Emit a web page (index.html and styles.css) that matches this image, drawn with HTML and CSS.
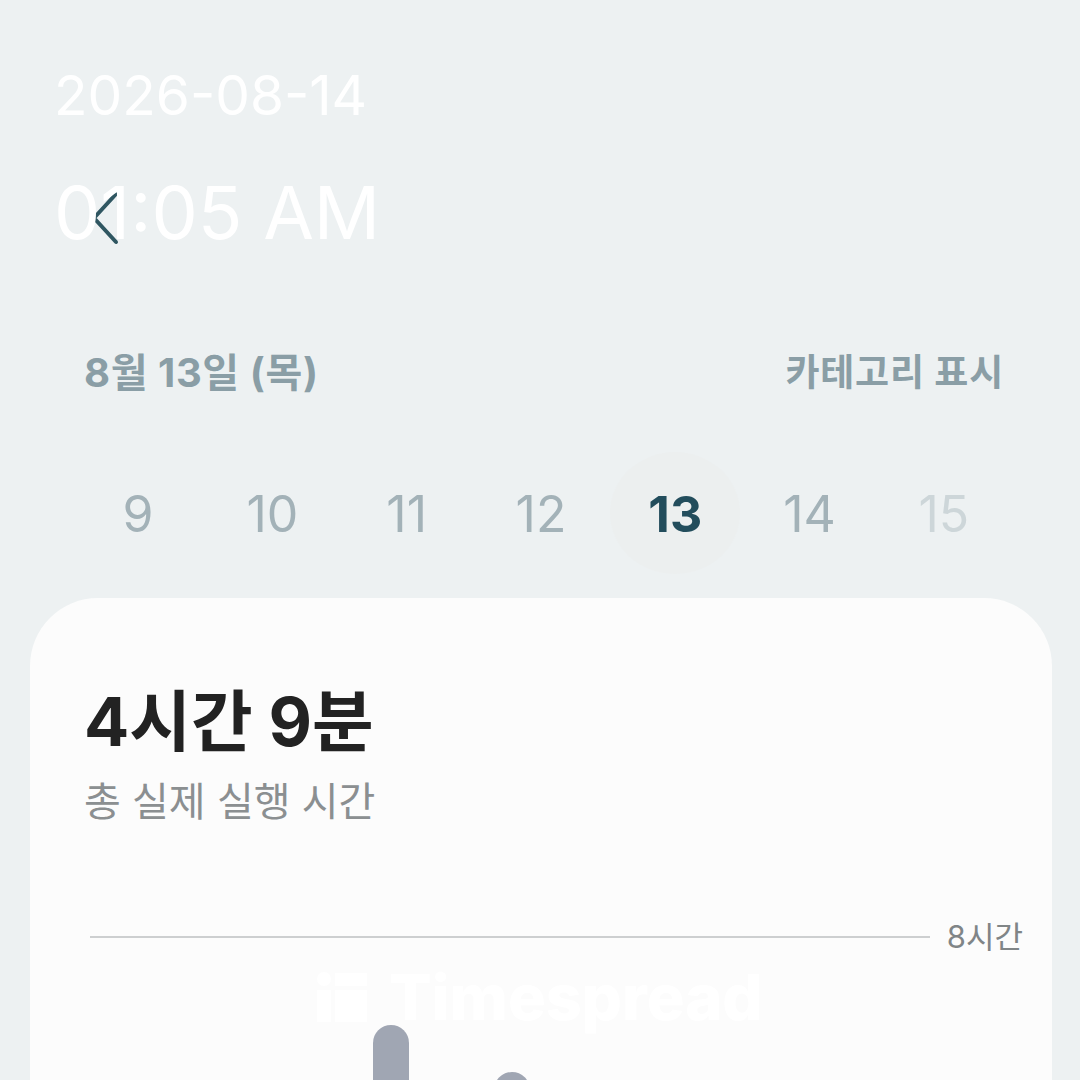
FILE: index.html
```html
<!DOCTYPE html>
<html lang="ko">
<head>
    <meta charset="UTF-8">
    <meta name="viewport" content="width=device-width, initial-scale=1.0">
    <title>Timespread</title>
    <link rel="stylesheet" href="styles.css">
</head>
<body>

    <div class="screen">
        <header class="top-bar">
            <svg class="back-icon" width="30" height="56" viewBox="0 0 30 56">
                <path d="M26 3 L4 27 L26 51" fill="none" stroke="#2f5661" stroke-width="4" stroke-linecap="round" stroke-linejoin="round"/>
            </svg>
        </header>

        <div class="date-row">
            <span class="date-label">8월 13일 (목)</span>
            <span class="category-label">카테고리 표시</span>
        </div>

        <div class="week">
            <div class="day">9</div>
            <div class="day">10</div>
            <div class="day">11</div>
            <div class="day">12</div>
            <div class="day day-active"><span class="day-circle">13</span></div>
            <div class="day">14</div>
            <div class="day day-future">15</div>
        </div>

        <section class="card">
            <h1 class="total">4시간 9분</h1>
            <p class="total-label">총 실제 실행 시간</p>

            <div class="chart">
                <div class="goal-line">
                    <span class="goal-rule"></span>
                    <span class="goal-label">8시간</span>
                </div>
                <div class="bars">
                    <div class="bar bar-tall"></div>
                    <div class="bar bar-short"></div>
                </div>
            </div>
        </section>

        <div class="stamp">
            <div class="stamp-date">2026-08-14</div>
            <div class="stamp-time">01:05 AM</div>
        </div>

        <div class="watermark">
            <svg width="50" height="50" viewBox="0 0 50 50">
                <circle cx="7" cy="7" r="7" fill="#fff"/>
                <rect x="0" y="18" width="14" height="32" fill="#fff"/>
                <rect x="18" y="1" width="32" height="13" fill="#fff"/>
                <rect x="18" y="18" width="32" height="32" fill="#fff"/>
            </svg>
            <span>Timespread</span>
        </div>
    </div>

</body>
</html>
```

FILE: styles.css
```css
* {
    box-sizing: border-box;
}
html, body {
    margin: 0;
    height: 100%;
    overflow: hidden;
}
body {
    font-family: Inter, "Noto Sans CJK KR", sans-serif;
    background-color: #edf1f2;
}
.screen {
    position: relative;
    height: 1080px;
    overflow: hidden;
    padding: 0 28px 0 30px;
}
.top-bar {
    height: 344px;
    padding: 191px 0 0 60px;
}
.back-icon {
    display: block;
}
.date-row {
    display: flex;
    justify-content: space-between;
    padding: 0 48px 0 54px;
    font-size: 37px;
    line-height: 58px;
    font-weight: 700;
    color: #8a9ea6;
}
.date-label {
    font-size: 40px;
    letter-spacing: 0.6px;
}
.category-label {
    letter-spacing: 0.8px;
}
.week {
    display: flex;
    justify-content: center;
    margin-top: 50px;
    height: 122px;
}
.day {
    width: 134.3px;
    display: flex;
    align-items: center;
    justify-content: center;
    font-size: 50px;
    padding-top: 2px;
    color: #a3b2b8;
}
.day-active {
    font-weight: 700;
    color: #224d5c;
    padding-top: 0;
}
.day-circle {
    width: 130px;
    height: 122px;
    display: flex;
    align-items: center;
    justify-content: center;
    padding-top: 2px;
    background-color: #ecefef;
    border-radius: 50%;
}
.day-future {
    color: #cdd6d9;
}
.card {
    margin-top: 24px;
    height: 700px;
    background-color: #fcfcfc;
    border-radius: 68px 68px 0 0;
    padding: 86px 30px 0 54px;
}
.total {
    margin: 0;
    font-size: 67px;
    line-height: 76px;
    font-weight: 700;
    color: #222;
}
.total-label {
    margin: 17px 0 0;
    font-size: 40px;
    line-height: 50px;
    color: #8b8f91;
}
.goal-line {
    display: flex;
    align-items: center;
    gap: 17px;
    margin-top: 90px;
    padding-left: 6px;
}
.goal-rule {
    flex: 1;
    height: 2px;
    background-color: #cdcfd0;
}
.goal-label {
    font-size: 31px;
    line-height: 40px;
    color: #808587;
    margin-right: -1px;
}
.bars {
    display: flex;
    align-items: flex-start;
    gap: 85px;
    margin-top: 68px;
    padding-left: 289px;
}
.bar {
    width: 36px;
    height: 200px;
    background-color: #a0a6b3;
    border-radius: 18px 18px 0 0;
}
.bar-short {
    margin-top: 47px;
}
.stamp {
    position: absolute;
    left: 54px;
    top: 60px;
    color: #fff;
}
.stamp-date {
    font-size: 55px;
    line-height: 70px;
}
.stamp-time {
    margin-top: 38px;
    font-size: 73.5px;
    line-height: 90px;
}
.watermark {
    position: absolute;
    left: 317px;
    top: 972px;
    display: flex;
    align-items: center;
    gap: 22px;
    font-size: 63px;
    line-height: 50px;
    font-weight: 800;
    color: #fff;
}
```
